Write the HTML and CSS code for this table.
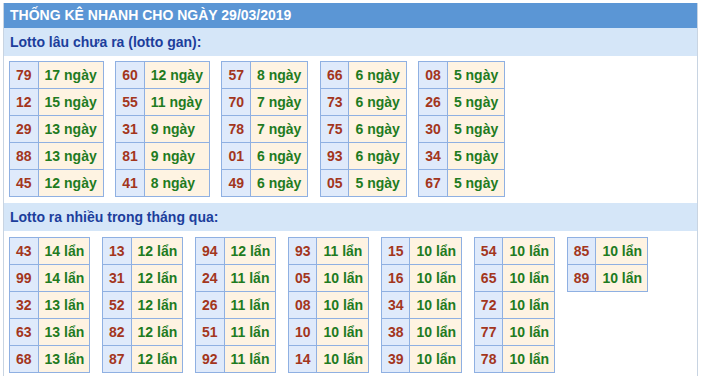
FILE: index.html
```html
<!DOCTYPE html>
<html>
<head>
<meta charset="utf-8">
<link rel="stylesheet" href="styles.css">
</head>
<body>
<div class="box">
  <div class="title">THỐNG KÊ NHANH CHO NGÀY 29/03/2019</div>
  <div class="sub">Lotto lâu chưa ra (lotto gan):</div>
  <div class="tables">
    <table class="t"><tr><td class="n">79</td><td class="v">17 ngày</td></tr><tr><td class="n">12</td><td class="v">15 ngày</td></tr><tr><td class="n">29</td><td class="v">13 ngày</td></tr><tr><td class="n">88</td><td class="v">13 ngày</td></tr><tr><td class="n">45</td><td class="v">12 ngày</td></tr></table>
    <table class="t"><tr><td class="n">60</td><td class="v">12 ngày</td></tr><tr><td class="n">55</td><td class="v">11 ngày</td></tr><tr><td class="n">31</td><td class="v">9 ngày</td></tr><tr><td class="n">81</td><td class="v">9 ngày</td></tr><tr><td class="n">41</td><td class="v">8 ngày</td></tr></table>
    <table class="t"><tr><td class="n">57</td><td class="v">8 ngày</td></tr><tr><td class="n">70</td><td class="v">7 ngày</td></tr><tr><td class="n">78</td><td class="v">7 ngày</td></tr><tr><td class="n">01</td><td class="v">6 ngày</td></tr><tr><td class="n">49</td><td class="v">6 ngày</td></tr></table>
    <table class="t"><tr><td class="n">66</td><td class="v">6 ngày</td></tr><tr><td class="n">73</td><td class="v">6 ngày</td></tr><tr><td class="n">75</td><td class="v">6 ngày</td></tr><tr><td class="n">93</td><td class="v">6 ngày</td></tr><tr><td class="n">05</td><td class="v">5 ngày</td></tr></table>
    <table class="t"><tr><td class="n">08</td><td class="v">5 ngày</td></tr><tr><td class="n">26</td><td class="v">5 ngày</td></tr><tr><td class="n">30</td><td class="v">5 ngày</td></tr><tr><td class="n">34</td><td class="v">5 ngày</td></tr><tr><td class="n">67</td><td class="v">5 ngày</td></tr></table>
  </div>
  <div class="sub">Lotto ra nhiều trong tháng qua:</div>
  <div class="tables tight">
    <table class="t"><tr><td class="n">43</td><td class="v">14 lẩn</td></tr><tr><td class="n">99</td><td class="v">14 lẩn</td></tr><tr><td class="n">32</td><td class="v">13 lẩn</td></tr><tr><td class="n">63</td><td class="v">13 lẩn</td></tr><tr><td class="n">68</td><td class="v">13 lẩn</td></tr></table>
    <table class="t"><tr><td class="n">13</td><td class="v">12 lẩn</td></tr><tr><td class="n">31</td><td class="v">12 lẩn</td></tr><tr><td class="n">52</td><td class="v">12 lẩn</td></tr><tr><td class="n">82</td><td class="v">12 lẩn</td></tr><tr><td class="n">87</td><td class="v">12 lẩn</td></tr></table>
    <table class="t"><tr><td class="n">94</td><td class="v">12 lẩn</td></tr><tr><td class="n">24</td><td class="v">11 lẩn</td></tr><tr><td class="n">26</td><td class="v">11 lẩn</td></tr><tr><td class="n">51</td><td class="v">11 lẩn</td></tr><tr><td class="n">92</td><td class="v">11 lẩn</td></tr></table>
    <table class="t"><tr><td class="n">93</td><td class="v">11 lẩn</td></tr><tr><td class="n">05</td><td class="v">10 lẩn</td></tr><tr><td class="n">08</td><td class="v">10 lẩn</td></tr><tr><td class="n">10</td><td class="v">10 lẩn</td></tr><tr><td class="n">14</td><td class="v">10 lẩn</td></tr></table>
    <table class="t"><tr><td class="n">15</td><td class="v">10 lẩn</td></tr><tr><td class="n">16</td><td class="v">10 lẩn</td></tr><tr><td class="n">34</td><td class="v">10 lẩn</td></tr><tr><td class="n">38</td><td class="v">10 lẩn</td></tr><tr><td class="n">39</td><td class="v">10 lẩn</td></tr></table>
    <table class="t"><tr><td class="n">54</td><td class="v">10 lẩn</td></tr><tr><td class="n">65</td><td class="v">10 lẩn</td></tr><tr><td class="n">72</td><td class="v">10 lẩn</td></tr><tr><td class="n">77</td><td class="v">10 lẩn</td></tr><tr><td class="n">78</td><td class="v">10 lẩn</td></tr></table>
    <table class="t"><tr><td class="n">85</td><td class="v">10 lẩn</td></tr><tr><td class="n">89</td><td class="v">10 lẩn</td></tr></table>
  </div>
</div>
</body>
</html>
```
FILE: styles.css
```css
html, body { background: #fff; }
body {
  margin: 3px 3px 0 3px;
  font-family: "Liberation Sans", Arial, sans-serif;
  font-weight: bold;
}
.box {
  border-left: 1px solid #c8d4e2;
  border-right: 1px solid #c8d4e2;
  min-height: 380px;
}
.title {
  background: #5b96d5;
  color: #fff;
  font-size: 14px;
  height: 25px;
  line-height: 25px;
  padding-left: 6px;
}
.sub {
  background: #d5e6f8;
  color: #1c3e9c;
  font-size: 14px;
  height: 28px;
  line-height: 28px;
  padding-left: 6px;
}
.tables {
  display: flex;
  flex-wrap: wrap;
  align-items: flex-start;
  gap: 11.5px;
  padding: 5px 5px 6px;
}
.tables.tight { gap: 11.7px; padding-top: 6px; }
.t {
  border-collapse: collapse;
  font-size: 14px;
}
.t td {
  border: 1px solid #8fb0e2;
  height: 27px;
  padding: 0 6px;
  box-sizing: border-box;
  vertical-align: middle;
  white-space: nowrap;
}
.tight .t td.v { padding: 0 5px 0 6px; }
.t td.n {
  background: #dfeafb;
  color: #a3361d;
}
.t td.v {
  background: #fef3e2;
  color: #1f7b1f;
}
```
